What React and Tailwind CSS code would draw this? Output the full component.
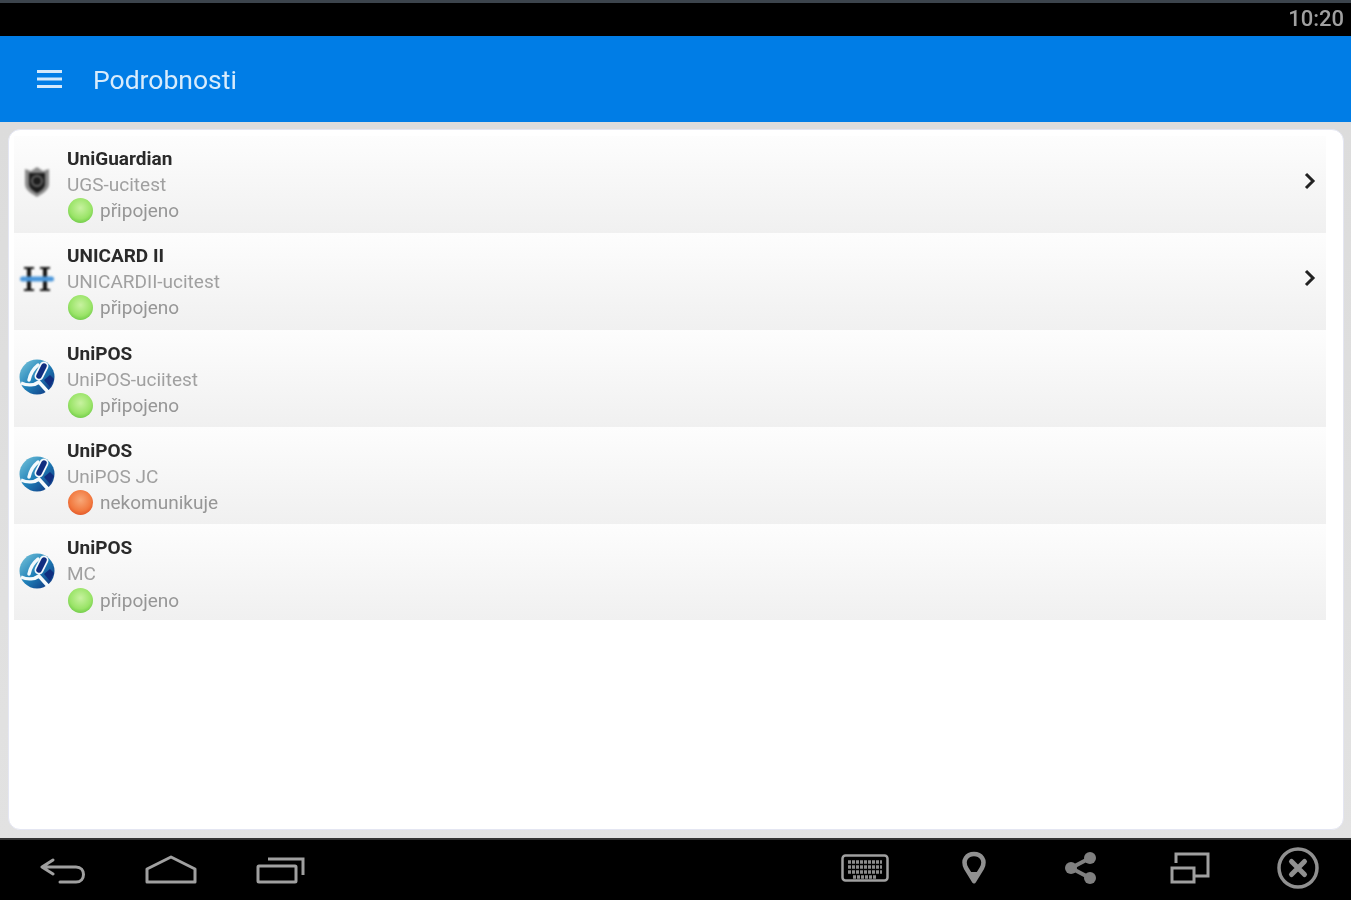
const rows = [
  { logo: "shield", name: "UniGuardian", sub: "UGS-ucitest", status: "připojeno", ok: true, arrow: true, h: "h-[97px]", shift: "" },
  { logo: "card", name: "UNICARD II", sub: "UNICARDII-ucitest", status: "připojeno", ok: true, arrow: true, h: "h-[97px]", shift: "" },
  { logo: "pos", name: "UniPOS", sub: "UniPOS-uciitest", status: "připojeno", ok: true, h: "h-[97px]", shift: "mt-[2px]" },
  { logo: "pos", name: "UniPOS", sub: "UniPOS JC", status: "nekomunikuje", ok: false, h: "h-[97px]", shift: "mt-[2px]" },
  { logo: "pos", name: "UniPOS", sub: "MC", status: "připojeno", ok: true, h: "h-[96px]", shift: "mt-[4px]" },
];

function Logo({ type }) {
  if (type === "shield") {
    return (
      <svg width="36" height="36" viewBox="0 0 36 36" className="blur-[1px] -mt-[4px]">
        <path d="M6 6 L12 8 L18 4 L24 8 L30 6 L30 21 C30 27 23 31 18 34 C13 31 6 27 6 21 Z" fill="#8a8a8a" />
        <path d="M10 10 L26 10 L26 21 C26 25 22 28 18 30 C14 28 10 25 10 21 Z" fill="#1c1c1c" />
        <circle cx="18" cy="18" r="5" fill="none" stroke="#666" strokeWidth="2" />
      </svg>
    );
  }
  if (type === "card") {
    return (
      <svg width="36" height="36" viewBox="0 0 36 36" className="blur-[0.8px] -mt-[2px]">
        <path d="M5 6 H15 V8 H12 V28 H15 V30 H5 V28 H8 V8 H5 Z" fill="#111" />
        <path d="M21 6 H31 V8 H28 V28 H31 V30 H21 V28 H24 V8 H21 Z" fill="#111" />
        <rect x="1" y="15.5" width="34" height="5" rx="2.5" fill="#4a96da" />
      </svg>
    );
  }
  return (
    <svg width="36" height="36" viewBox="0 0 36 36" className="blur-[0.7px]">
      <defs>
        <linearGradient id="posg" x1="0" y1="0" x2="1" y2="1">
          <stop offset="0" stopColor="#7cc8dc" />
          <stop offset="0.5" stopColor="#1f80b8" />
          <stop offset="1" stopColor="#0c2a78" />
        </linearGradient>
      </defs>
      <circle cx="18" cy="18" r="17.5" fill="url(#posg)" />
      <path d="M19 6 C14 10 11 16 10 21" fill="none" stroke="#f4fafc" strokeWidth="3.5" strokeLinecap="round" />
      <path d="M2 24 C9 27 16 26 20 23 L29 33" fill="none" stroke="#f4fafc" strokeWidth="3.5" />
      <path d="M25 7 L20 17" fill="none" stroke="#f4fafc" strokeWidth="9" strokeLinecap="round" />
      <path d="M25 7 L20 17" fill="none" stroke="#102e80" strokeWidth="5.5" strokeLinecap="round" />
      <path d="M25 21 L31 16 L35 20 L31 28 Z" fill="#102e80" />
    </svg>
  );
}

function Dot({ ok }) {
  return (
    <span
      className={
        ok
          ? "w-[25px] h-[25px] rounded-full shrink-0 ml-[1px] bg-[radial-gradient(circle_at_50%_40%,#c8f2a0_0%,#9ae468_55%,#4cb62c_100%)]"
          : "w-[25px] h-[25px] rounded-full shrink-0 ml-[1px] bg-[radial-gradient(circle_at_50%_40%,#f8a878_0%,#f27a40_55%,#d63a12_100%)]"
      }
    />
  );
}

function Row({ r }) {
  return (
    <div className={`${r.h} flex items-center bg-gradient-to-b from-[#fdfdfd] to-[#f0f0f0]`}>
      <div className="w-[45px] flex justify-center shrink-0 -mt-[3px]">
        <Logo type={r.logo} />
      </div>
      <div className={`ml-[8px] flex flex-col ${r.shift}`}>
        <div className="h-[26px] leading-[26px] text-[19px] font-bold text-[#2a2a2a] blur-[0.7px]">{r.name}</div>
        <div className="h-[26px] leading-[26px] text-[19px] text-[#a0a0a0] blur-[0.7px]">{r.sub}</div>
        <div className="h-[26px] flex items-center">
          <Dot ok={r.ok} />
          <span className="ml-[7px] mt-[2px] text-[19px] text-[#969696] blur-[0.7px]">{r.status}</span>
        </div>
      </div>
      {r.arrow && (
        <svg width="14" height="18" viewBox="0 0 14 18" className="ml-auto mr-[9px] -mt-[7px] blur-[0.5px]">
          <path d="M3 2 L10 9 L3 16" fill="none" stroke="#222" strokeWidth="3" />
        </svg>
      )}
    </div>
  );
}

function NavIcon({ children, w, h }) {
  return (
    <svg width={w} height={h} viewBox={`0 0 ${w} ${h}`} className="blur-[0.7px]" fill="none" stroke="#a0a0a0" strokeWidth="3">
      {children}
    </svg>
  );
}

export default function App() {
  return (
    <div className="w-[1351px] h-[900px] flex flex-col overflow-hidden font-['Roboto',sans-serif] bg-[#dcdcdc]">
      <div className="h-[36px] shrink-0 bg-black border-t-[3px] border-[#3c444c] flex items-center justify-end pr-[7px]">
        <span className="text-[22px] font-medium text-[#a0a0a0] blur-[0.6px] -mt-[2px]">10:20</span>
      </div>
      <div className="h-[86px] shrink-0 bg-[#007de6] flex items-center">
        <svg width="25" height="20" viewBox="0 0 25 20" className="ml-[37px] blur-[0.5px]">
          <path d="M0 2.5 H25 M0 10 H25 M0 17.5 H25" stroke="#d4e9fb" strokeWidth="3" />
        </svg>
        <span className="ml-[31px] mt-[2px] text-[26.5px] text-[#d8ecfc] blur-[0.6px]">Podrobnosti</span>
      </div>
      <div className="flex-1 min-h-0 flex flex-col pl-[8px] pr-[7px] pt-[7px] pb-[8px] bg-gradient-to-b from-[#dcdcdc] to-[#e2e2e2]">
        <div className="flex-1 min-h-0 bg-white rounded-[12px] border border-[#e4e6f2] pt-[6px] pl-[5px] pr-[17px]">
          {rows.map((r, i) => (
            <Row key={i} r={r} />
          ))}
        </div>
      </div>
      <div className="h-[62px] shrink-0 bg-black border-t-[2px] border-[#333333] flex items-center">
        <div className="ml-[38px] flex items-center">
          <NavIcon w={48} h={32}>
            <path d="M15 6 L4 13 L15 20 M5 13 H38 C48 13 48 28 38 28 H22" strokeLinejoin="round" strokeLinecap="round" />
          </NavIcon>
        </div>
        <div className="ml-[59px]">
          <NavIcon w={52} h={30}>
            <path d="M2 27 H50 V14 L26 2 L2 14 Z" strokeLinejoin="round" />
          </NavIcon>
        </div>
        <div className="ml-[59px]">
          <NavIcon w={50} h={30}>
            <rect x="2" y="11" width="38" height="16" rx="1" />
            <path d="M12 4 H47 V20" />
          </NavIcon>
        </div>
        <div className="ml-auto flex items-center mr-[32px] -mt-[4px]">
          <NavIcon w={48} h={28}>
            <rect x="1.5" y="1.5" width="45" height="25" rx="3" strokeWidth="2.5" />
            <path d="M7 8 H41 M7 13 H41 M7 18 H41 M12 23 H36" strokeWidth="3.5" strokeDasharray="3 1" stroke="#8c8c8c" />
          </NavIcon>
          <div className="ml-[73px]">
            <NavIcon w={24} h={34}>
              <path d="M12 30 L4 17 C0 9 5 3 12 3 C19 3 24 9 20 17 Z" strokeLinejoin="round" strokeWidth="4.5" stroke="#909090" />
              <path d="M12 33 L6 21 H18 Z" fill="#909090" strokeWidth="0" />
            </NavIcon>
          </div>
          <div className="ml-[78px]">
            <NavIcon w={34} h={34}>
              <path d="M26 7 L7 17 L26 27" strokeWidth="4" stroke="#808080" />
              <circle cx="26" cy="7" r="6" fill="#808080" strokeWidth="0" />
              <circle cx="7" cy="17" r="6" fill="#808080" strokeWidth="0" />
              <circle cx="26" cy="27" r="6" fill="#808080" strokeWidth="0" />
            </NavIcon>
          </div>
          <div className="ml-[72px]">
            <NavIcon w={40} h={32}>
              <path d="M6 11 V2 H38 V24 H24" />
              <rect x="2" y="16" width="22" height="14" />
            </NavIcon>
          </div>
          <div className="ml-[67px]">
            <NavIcon w={42} h={42}>
              <circle cx="21" cy="21" r="19" strokeWidth="3.5" stroke="#909090" />
              <path d="M14.5 14.5 L27.5 27.5 M27.5 14.5 L14.5 27.5" strokeWidth="5" strokeLinecap="round" stroke="#909090" />
            </NavIcon>
          </div>
        </div>
      </div>
    </div>
  );
}
